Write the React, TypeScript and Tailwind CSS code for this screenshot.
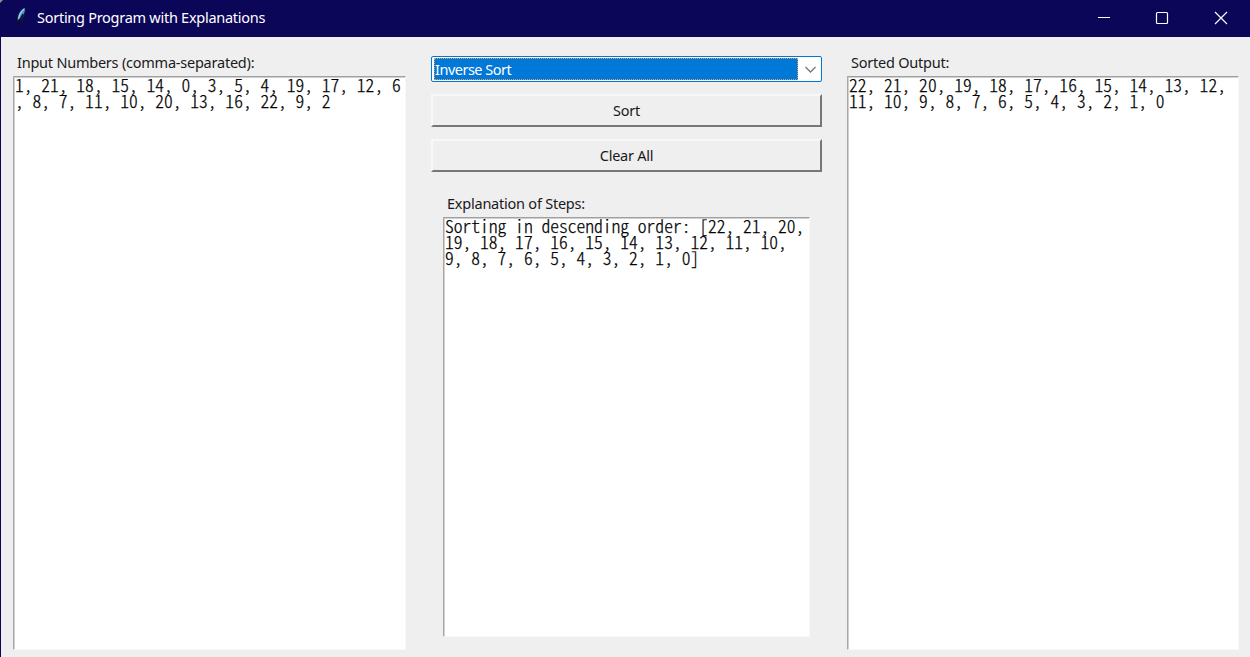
import React from 'react';

const uiFont = "font-['Noto_Sans','Open_Sans',sans-serif]";

function Feather() {
  return (
    <svg width="14" height="22" viewBox="0 0 14 22" className="ml-[14px] mt-[5px] shrink-0">
      <path d="M11.6 2.4C7.4 3.4 3.4 7.6 2.8 13l.8 4.6 2.8-1.4C9.8 13.4 11.8 8 11.6 2.4Z" fill="#14233f" />
      <path d="M11 3C7.4 4.4 4.2 8.4 3.6 14.6l2.6-.6C9 11 11.2 7.6 11 3Z" fill="#4f92cc" />
      <path d="M10 4C7.2 6.2 5.4 9.6 4.6 13.8" fill="none" stroke="#a9d2ee" strokeWidth="1.1" />
      <path d="M9 9 5.2 16v4" fill="none" stroke="#070a18" strokeWidth="1.3" />
    </svg>
  );
}

function TitleBar() {
  return (
    <header className="relative flex h-[37px] shrink-0 items-start bg-[#0c0659] text-white">
      <svg width="4" height="4" className="absolute left-0 top-0">
        <path d="M0 0h3L0 3Z" fill="#8d957f" />
      </svg>
      <Feather />
      <h1 className="ml-[9px] mt-[6px] w-[400px] whitespace-nowrap text-[14.5px] leading-[22px] tracking-[-0.27px]">
        Sorting Program with Explanations
      </h1>
      <div className="ml-auto flex">
        <svg width="58" height="36" viewBox="0 0 58 36" className="block" stroke="#fff" fill="none">
          <path d="M23 17.5h12" />
        </svg>
        <svg width="58" height="36" viewBox="0 0 58 36" className="block" stroke="#fff" fill="none" strokeWidth="1.2">
          <rect x="23.5" y="12.5" width="11" height="11" rx="1" />
        </svg>
        <svg width="59" height="36" viewBox="0 0 59 36" className="block" stroke="#fff" fill="none" strokeWidth="1.2">
          <path d="m24 12 12 12M36 12 24 24" />
        </svg>
      </div>
    </header>
  );
}

function Label({ children }: { children: string }) {
  return (
    <div className="h-5 whitespace-nowrap pl-1 text-[14.5px] leading-5 tracking-[-0.23px] text-[#1a1a1a]">
      {children}
    </div>
  );
}

function TextArea({ lines }: { lines: string[] }) {
  return (
    <div className="flex min-h-0 flex-1 border-b border-l border-r border-t border-b-[#f8f8f8] border-l-[#a8a8a8] border-r-[#f8f8f8] border-t-[#a0a0a0]">
      <div className="flex-1 border-l border-t border-l-[#d0d0d0] border-t-[#d0d0d0] bg-white font-['Noto_Sans_CJK_JP',monospace] text-[17.54px] font-light leading-[16px] text-black [-webkit-text-stroke:0.25px_#000] [font-feature-settings:'hwid']">
        <div className="-mt-px">
          {lines.map((line) => (
            <div key={line} className="whitespace-pre">{line}</div>
          ))}
        </div>
      </div>
    </div>
  );
}

function Button({ children }: { children: string }) {
  return (
    <button className="flex h-[33px] w-full items-center justify-center border-2 border-b-[#777] border-l-[#f8f8f8] border-r-[#777] border-t-[#f8f8f8] bg-[#efefef] pb-[2px] text-[14.5px] leading-5 tracking-[-0.27px] text-[#1a1a1a]">
      {children}
    </button>
  );
}

function SortSelect() {
  return (
    <div className="flex h-[26px] rounded-[2px] border border-[#0078d4] bg-white p-px pl-[2px]">
      <div className="flex flex-1 items-center border border-dotted border-[#e09a5b] bg-[#0078d7] text-[14.5px] leading-5 tracking-[-0.5px] text-white">
        Inverse Sort
      </div>
      <svg width="22" height="22" viewBox="0 0 22 22" fill="none" stroke="#777" strokeWidth="1.3">
        <path d="m7.5 9 5 5 5-5" />
      </svg>
    </div>
  );
}

export default function App() {
  return (
    <div className={`flex h-[657px] w-[1250px] flex-col overflow-hidden bg-[#efefef] ${uiFont}`}>
      <TitleBar />
      <main className="flex min-h-0 flex-1 border-l border-[#0c0659] pl-3">
        <section className="flex w-[393px] flex-col pb-[7px] pt-[15px]">
          <Label>Input Numbers (comma-separated):</Label>
          <div className="h-[4px]" />
          <TextArea
            lines={[
              '1, 21, 18, 15, 14, 0, 3, 5, 4, 19, 17, 12, 6',
              ', 8, 7, 11, 10, 20, 13, 16, 22, 9, 2',
            ]}
          />
        </section>
        <section className="ml-[25px] flex w-[391px] flex-col pb-5 pt-[19px]">
          <SortSelect />
          <div className="mt-3 flex flex-col gap-3">
            <Button>Sort</Button>
            <Button>Clear All</Button>
          </div>
          <div className="mx-3 mt-[21px] flex min-h-0 flex-1 flex-col">
            <Label>Explanation of Steps:</Label>
            <div className="h-[4px]" />
            <TextArea
              lines={[
                'Sorting in descending order: [22, 21, 20,',
                '19, 18, 17, 16, 15, 14, 13, 12, 11, 10,',
                '9, 8, 7, 6, 5, 4, 3, 2, 1, 0]',
              ]}
            />
          </div>
        </section>
        <section className="ml-[25px] flex w-[392px] flex-col pb-[7px] pt-[15px]">
          <Label>Sorted Output:</Label>
          <div className="h-[4px]" />
          <TextArea
            lines={[
              '22, 21, 20, 19, 18, 17, 16, 15, 14, 13, 12,',
              '11, 10, 9, 8, 7, 6, 5, 4, 3, 2, 1, 0',
            ]}
          />
        </section>
      </main>
    </div>
  );
}
